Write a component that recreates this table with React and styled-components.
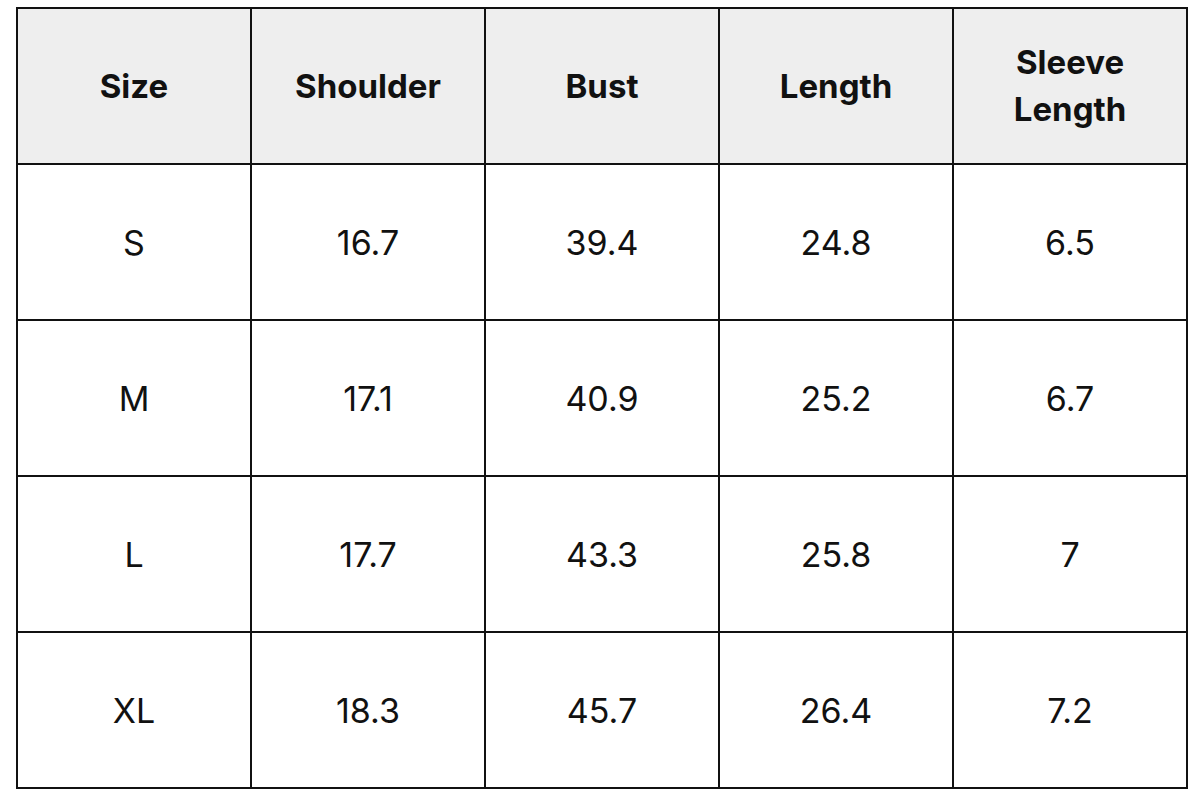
import styled, { createGlobalStyle } from "styled-components";

const GlobalStyle = createGlobalStyle`
  body {
    margin: 0;
    background: #ffffff;
    font-family: Inter, "Liberation Sans", sans-serif;
    color: #111111;
  }
`;

const Page = styled.div`
  padding: 7px 0 0 16px;
`;

const Table = styled.table`
  border-collapse: collapse;
  width: 1172px;
  table-layout: fixed;
`;

const HeadCell = styled.th`
  border: 2px solid #111111;
  background-color: #eeeeee;
  height: 154px;
  padding: 0 16px;
  font-size: 33px;
  font-weight: 700;
  line-height: 1.42;
  text-align: center;
`;

const Cell = styled.td`
  border: 2px solid #111111;
  height: 154px;
  padding: 0;
  font-size: 34px;
  font-weight: 400;
  text-align: center;
`;

const HEADERS = ["Size", "Shoulder", "Bust", "Length", "Sleeve Length"];

const ROWS = [
  ["S", "16.7", "39.4", "24.8", "6.5"],
  ["M", "17.1", "40.9", "25.2", "6.7"],
  ["L", "17.7", "43.3", "25.8", "7"],
  ["XL", "18.3", "45.7", "26.4", "7.2"],
];

function App() {
  return (
    <>
      <GlobalStyle />
      <Page>
        <Table>
          <thead>
            <tr>
              {HEADERS.map((h) => (
                <HeadCell key={h}>{h}</HeadCell>
              ))}
            </tr>
          </thead>
          <tbody>
            {ROWS.map((row) => (
              <tr key={row[0]}>
                {row.map((value, i) => (
                  <Cell key={i}>{value}</Cell>
                ))}
              </tr>
            ))}
          </tbody>
        </Table>
      </Page>
    </>
  );
}

export default App;
